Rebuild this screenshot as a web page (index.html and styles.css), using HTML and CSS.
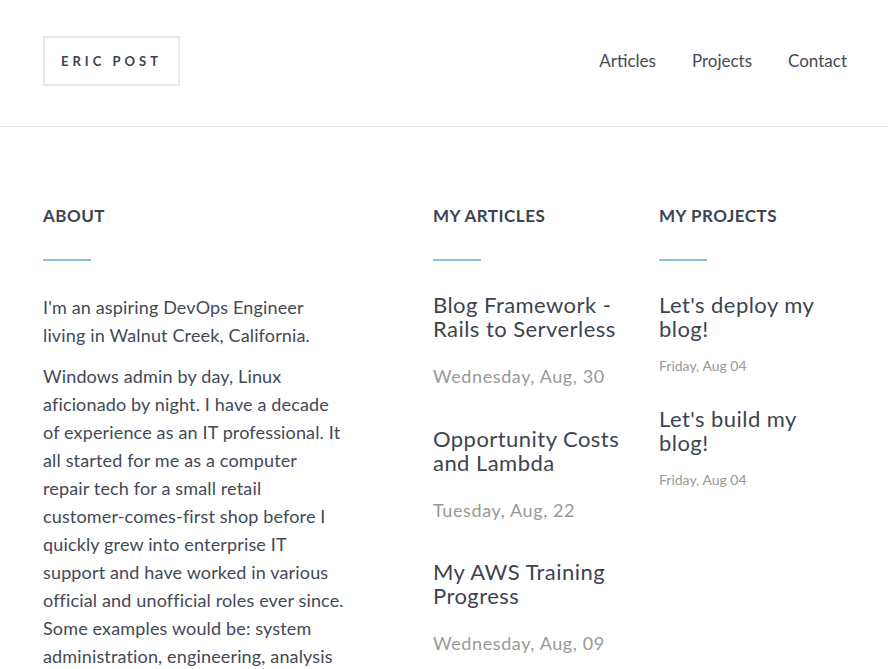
FILE: index.html
```html
<!DOCTYPE html>
<html>
<head>
<meta charset="utf-8">
<title>Eric Post</title>
<link rel="stylesheet" href="styles.css">
</head>
<body>
<header class="site-header">
  <a class="logo" href="#">ERIC POST</a>
  <nav class="nav">
    <a href="#">Articles</a>
    <a href="#">Projects</a>
    <a href="#">Contact</a>
  </nav>
</header>
<main class="content">
  <section class="col about">
    <h2 class="col-title">ABOUT</h2>
    <div class="rule"></div>
    <div class="about-text">
      <p>I'm an aspiring DevOps Engineer<br>living in Walnut Creek, California.</p>
      <p>Windows admin by day, Linux<br>aficionado by night. I have a decade<br>of experience as an IT professional. It<br>all started for me as a computer<br>repair tech for a small retail<br>customer-comes-first shop before I<br>quickly grew into enterprise IT<br>support and have worked in various<br>official and unofficial roles ever since.<br>Some examples would be: system<br>administration, engineering, analysis</p>
    </div>
  </section>
  <section class="col articles">
    <h2 class="col-title">MY ARTICLES</h2>
    <div class="rule"></div>
    <article class="item">
      <h3 class="item-title">Blog Framework - Rails to Serverless</h3>
      <div class="item-date">Wednesday, Aug, 30</div>
    </article>
    <article class="item">
      <h3 class="item-title">Opportunity Costs and Lambda</h3>
      <div class="item-date">Tuesday, Aug, 22</div>
    </article>
    <article class="item">
      <h3 class="item-title">My AWS Training Progress</h3>
      <div class="item-date">Wednesday, Aug, 09</div>
    </article>
  </section>
  <section class="col projects">
    <h2 class="col-title">MY PROJECTS</h2>
    <div class="rule"></div>
    <article class="item">
      <h3 class="item-title">Let's deploy my blog!</h3>
      <div class="item-date">Friday, Aug 04</div>
    </article>
    <article class="item">
      <h3 class="item-title">Let's build my blog!</h3>
      <div class="item-date">Friday, Aug 04</div>
    </article>
  </section>
</main>
</body>
</html>
```
FILE: styles.css
```css
* { box-sizing: border-box; }
html, body { margin: 0; padding: 0; background: #fff; }
body {
  font-family: Lato, "Open Sans", sans-serif;
  color: #3d4451;
  overflow: hidden;
}
a { text-decoration: none; color: inherit; }

.site-header {
  height: 127px;
  border-bottom: 1px solid #e6e6e6;
  display: flex;
  align-items: center;
  justify-content: space-between;
  padding: 0 41px 4px 43px;
}
.logo {
  width: 137px;
  height: 50px;
  border: 2px solid #e8e8e8;
  display: flex;
  align-items: center;
  justify-content: center;
  font-size: 13px;
  font-weight: 700;
  letter-spacing: 4px;
  color: #3d4451;
}
.nav {
  display: flex;
  gap: 36px;
  font-size: 17px;
  color: #444a55;
  margin-bottom: 2px;
}

.content {
  display: grid;
  grid-template-columns: 390px 226px 1fr;
  padding: 77px 41px 0 43px;
}
.col-title {
  margin: 0;
  font-size: 17px;
  font-weight: 700;
  letter-spacing: 0.5px;
  line-height: 24px;
  color: #3d4451;
}
.rule {
  width: 48px;
  height: 2px;
  background: #8ac4d8;
  margin: 31px 0 32px;
}
.about p {
  margin: 0 0 13px;
  width: 330px;
  font-size: 18px;
  letter-spacing: 0.15px;
  line-height: 28px;
  color: #434957;
}
.item-title {
  margin: 0;
  font-size: 22px;
  font-weight: 400;
  letter-spacing: 0.45px;
  line-height: 24px;
  color: #3d4451;
}
.articles .item { margin-bottom: 38.5px; }
.articles .item-title { width: 190px; }
.articles .item-date {
  margin-top: 23px;
  font-size: 18px;
  letter-spacing: 0.6px;
  line-height: 24px;
  color: #999;
}
.projects .item { margin-bottom: 31px; }
.projects .item-title { width: 180px; }
.projects .item-date {
  margin-top: 15px;
  font-size: 14px;
  line-height: 20px;
  color: #999;
}
```
